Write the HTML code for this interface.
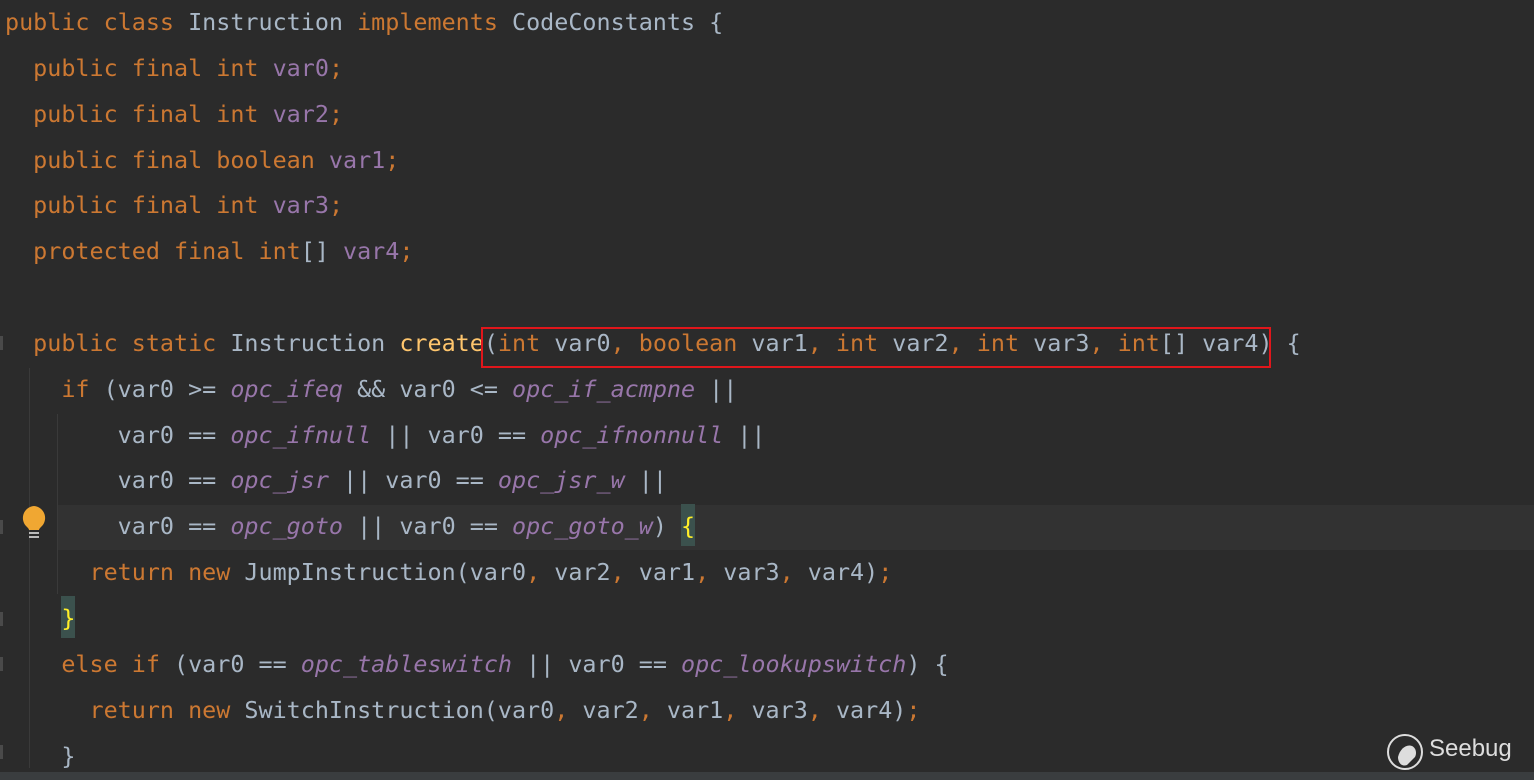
<!DOCTYPE html>
<html><head><style>
html,body{margin:0;padding:0;width:1534px;height:780px;overflow:hidden;background:#2b2b2b;}
.code{position:absolute;left:5px;top:0px;font-family:"DejaVu Sans Mono","Liberation Mono",monospace;font-size:23.4px;line-height:45.85px;color:#a9b7c6;white-space:pre;}
.k{color:#cc7832}.f{color:#9876aa;font-style:italic}.v{color:#9876aa}.m{color:#ffc66d}
.b{background:#3b514d;color:#ffef28;padding:8px 0 6px}
.hl{position:absolute;left:57px;right:0;top:505px;height:45px;background:#323232;}
.box{position:absolute;left:481px;top:327px;width:786px;height:37px;border:2px solid #e0161b;}
.g{position:absolute;width:1px;background:#3a3a3a;}
.gm{position:absolute;left:0;width:3px;height:14px;background:#4a4a4a;}
.bot{position:absolute;left:0;right:0;top:772px;height:8px;background:#3a3d3f;}
</style></head><body>
<div class="hl"></div>
<div class="g" style="left:29px;top:368px;height:400px"></div>
<div class="g" style="left:57px;top:414px;height:180px"></div>
<div class="gm" style="top:336px"></div>
<div class="gm" style="top:520px"></div>
<div class="gm" style="top:612px"></div>
<div class="gm" style="top:657px"></div>
<div class="gm" style="top:745px"></div>
<div class="code"><span class="k">public class</span> Instruction <span class="k">implements</span> CodeConstants {
  <span class="k">public final int</span> <span class="v">var0</span><span class="k">;</span>
  <span class="k">public final int</span> <span class="v">var2</span><span class="k">;</span>
  <span class="k">public final boolean</span> <span class="v">var1</span><span class="k">;</span>
  <span class="k">public final int</span> <span class="v">var3</span><span class="k">;</span>
  <span class="k">protected final int</span>[] <span class="v">var4</span><span class="k">;</span>

  <span class="k">public static</span> Instruction <span class="m">create</span>(<span class="k">int</span> var0<span class="k">, boolean</span> var1<span class="k">, int</span> var2<span class="k">, int</span> var3<span class="k">, int</span>[] var4) {
    <span class="k">if</span> (var0 &gt;= <span class="f">opc_ifeq</span> &amp;&amp; var0 &lt;= <span class="f">opc_if_acmpne</span> ||
        var0 == <span class="f">opc_ifnull</span> || var0 == <span class="f">opc_ifnonnull</span> ||
        var0 == <span class="f">opc_jsr</span> || var0 == <span class="f">opc_jsr_w</span> ||
        var0 == <span class="f">opc_goto</span> || var0 == <span class="f">opc_goto_w</span>) <span class="b">{</span>
      <span class="k">return new</span> JumpInstruction(var0<span class="k">,</span> var2<span class="k">,</span> var1<span class="k">,</span> var3<span class="k">,</span> var4)<span class="k">;</span>
    <span class="b">}</span>
    <span class="k">else if</span> (var0 == <span class="f">opc_tableswitch</span> || var0 == <span class="f">opc_lookupswitch</span>) {
      <span class="k">return new</span> SwitchInstruction(var0<span class="k">,</span> var2<span class="k">,</span> var1<span class="k">,</span> var3<span class="k">,</span> var4)<span class="k">;</span>
    }</div>
<div class="box"></div>
<svg style="position:absolute;left:20px;top:505px" width="28" height="34" viewBox="0 0 28 34">
<path d="M14 1a12 12 0 0 0-7 21c1 1 2 2 2 3h10c0-1 1-2 2-3A12 12 0 0 0 14 1z" fill="#f0a732"/>
<rect x="9" y="27" width="10" height="2" fill="#bbb"/><rect x="9" y="31" width="10" height="2" fill="#bbb"/>
</svg>
<div class="bot"></div>
<svg style="position:absolute;left:1386px;top:731px" width="40" height="42" viewBox="0 0 40 42">
<circle cx="19" cy="21" r="17" fill="none" stroke="#ddd" stroke-width="2"/>
<path d="M12 26c2-8 8-13 14-11 4 2 5 7 3 11l-8 8c-5 2-9-2-9-8z" fill="#ddd"/>
</svg>
<div style="position:absolute;left:1429px;top:735px;font-family:'Liberation Sans',sans-serif;font-size:24px;color:#ddd;">Seebug</div>
</body></html>
